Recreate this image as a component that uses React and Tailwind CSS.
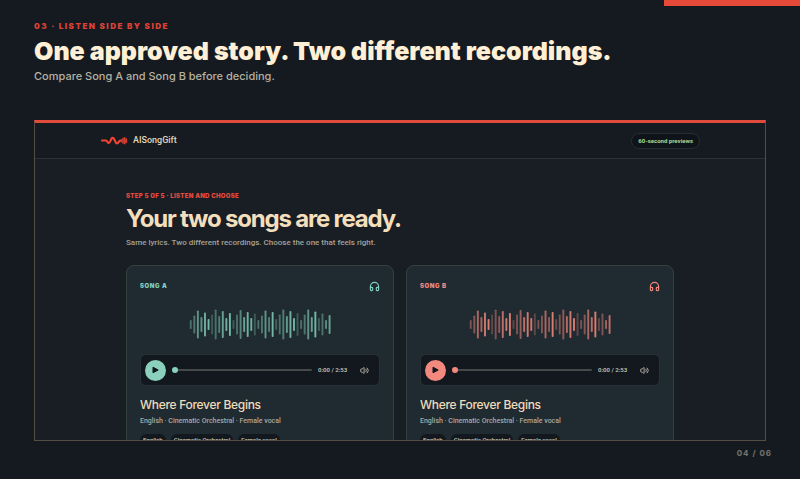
import { Headphones, Volume2 } from "lucide-react";

const WAVE = [
  [9, 0.5], [18, 0.55], [28, 0.75], [15, 0.75], [24, 0.95], [11, 1], [20, 0.35], [30, 0.5],
  [17, 0.6], [27, 0.85], [13, 0.95], [23, 1], [9, 0.35], [20, 0.5], [29, 0.65], [15, 0.85],
  [25, 0.95], [13, 0.95], [22, 0.35], [9, 0.5], [18, 0.55], [28, 0.75], [15, 0.6], [25, 1],
  [11, 0.4], [20, 0.5], [30, 0.6], [17, 0.8], [27, 0.95], [13, 1], [23, 0.35], [9, 0.5],
  [20, 0.55], [30, 0.75], [15, 0.85], [26, 1], [13, 0.4], [22, 0.5], [9, 0.7], [19, 0.85],
];

const SONGS = [
  {
    id: "a",
    label: "SONG A",
    text: "text-[#83d0bf]",
    fill: "bg-[#8ad0bd]",
    thumb: "[&::-webkit-slider-thumb]:bg-[#8ad0bd]",
    wave: "text-[#74b7a6]",
  },
  {
    id: "b",
    label: "SONG B",
    text: "text-[#f3897e]",
    fill: "bg-[#f3897e]",
    thumb: "[&::-webkit-slider-thumb]:bg-[#f3897e]",
    wave: "text-[#d97d72]",
  },
];

function Waveform({ className }) {
  return (
    <svg width="142" height="32" viewBox="0 0 142 32" className={className} aria-hidden="true">
      {WAVE.map(([h, o], i) => (
        <rect key={i} x={i * 3.56 + 0.8} y={16.5 - h / 2} width="1.9" height={h} rx="0.8" fill="currentColor" opacity={o} />
      ))}
    </svg>
  );
}

function Logo() {
  return (
    <svg width="29" height="10" viewBox="0 0 29 10" aria-hidden="true">
      <path
        d="M2 4.500h4c1.500 0 1.300 2.500 2.800 2.500 2 0 1.700-5.200 3.900-5.200S14.800 7.300 17 7.300c1.600 0 1.600-2.600 3.500-2.600"
        fill="none"
        stroke="#f4432f"
        strokeWidth="2.200"
        strokeLinecap="round"
      />
      <path d="M21.300 3.700v2M23 2.300v4.800M24.700 1.700v6M26.400 3v3.400" stroke="#cf3e32" strokeWidth="1.600" strokeLinecap="round" />
    </svg>
  );
}

function SongCard({ song }) {
  return (
    <article className="rounded-lg border border-[#35413f] bg-[#202a31] px-[13px] pt-3">
      <div className="flex h-4 items-center justify-between">
        <h3 className={`text-[6px] font-black leading-none tracking-widest ${song.text}`}>{song.label}</h3>
        <Headphones size={11} strokeWidth={2.5} className={song.text} aria-hidden="true" />
      </div>
      <div className="flex h-[60px] items-center justify-center">
        <Waveform className={song.wave} />
      </div>
      <div className="flex h-8 items-center rounded-md border border-[#283137] bg-[#12181e] pl-1 pr-[10px]">
        <button aria-label={`Play ${song.label}`} className={`flex size-[21px] shrink-0 items-center justify-center rounded-full ${song.fill}`}>
          <svg width="7" height="8" viewBox="0 0 7 8" aria-hidden="true">
            <path d="M1 1.200v5.600L6.200 4z" fill="#10171c" stroke="#10171c" strokeLinejoin="round" />
          </svg>
        </button>
        <input
          type="range"
          min="0"
          max="173"
          defaultValue="0"
          aria-label={`${song.label} position`}
          className={`ml-[6px] h-[6px] min-w-0 flex-1 appearance-none bg-transparent [&::-webkit-slider-runnable-track]:h-[2px] [&::-webkit-slider-runnable-track]:rounded-full [&::-webkit-slider-runnable-track]:bg-[#46494a] [&::-webkit-slider-thumb]:-mt-[2px] [&::-webkit-slider-thumb]:size-[6px] [&::-webkit-slider-thumb]:appearance-none [&::-webkit-slider-thumb]:rounded-full ${song.thumb}`}
        />
        <span className="ml-[6px] w-[30px] whitespace-nowrap font-[Roboto,sans-serif] text-[6px] font-semibold leading-none text-[#c5c1b2]">0:00 / 2:53</span>
        <button aria-label={`${song.label} volume`} className="ml-3 text-[#b9b5a8]">
          <Volume2 size={9} strokeWidth={2.5} aria-hidden="true" />
        </button>
      </div>
      <h4 className="mt-[11px] text-[12px] font-medium leading-4 tracking-tight text-[#efdcba]">Where Forever Begins</h4>
      <p className="mt-1 font-[Roboto,sans-serif] text-[7px] font-medium leading-[9px] text-[#aaa99f]">English · Cinematic Orchestral · Female vocal</p>
      <ul className="mt-2 flex gap-[5px] font-[Roboto,sans-serif] text-[6px] font-semibold leading-none text-[#c5c1b2]">
        {["English", "Cinematic Orchestral", "Female vocal"].map((tag) => (
          <li key={tag} className="whitespace-nowrap rounded-full bg-[#12181e] px-[3px] py-[3px]">{tag}</li>
        ))}
      </ul>
    </article>
  );
}

export default function App() {
  return (
    <div className="relative flex h-screen flex-col bg-[#151a21] px-[34px] pt-5 font-['Inter',sans-serif]">
      <div className="absolute right-0 top-0 h-[6px] w-[17%] bg-[#e54937]" />
      <header className="h-[100px] shrink-0">
        <p className="text-[8px] font-black leading-3 tracking-[1.5px] text-[#db4237]">03 · LISTEN SIDE BY SIDE</p>
        <h1 className="mt-[3px] whitespace-nowrap text-[25px] font-black leading-8 text-[#fff0d5]">One approved story. Two different recordings.</h1>
        <p className="text-[11px] font-medium leading-[18px] text-[#b5b1a1]">Compare Song A and Song B before deciding.</p>
      </header>

      <main className="min-h-0 flex-1 overflow-hidden border border-t-[3px] border-[#554d43] border-t-[#e04b3b] bg-[#191e24]">
        <div className="h-9 border-b border-[#2a3035] bg-[#151b21]">
          <div className="mx-auto flex h-full max-w-[600px] items-center justify-between">
            <a href="#home" className="flex items-center gap-1 font-[Roboto,sans-serif] text-[9px] font-medium leading-none text-[#e3d6bb]">
              <Logo />
              AISongGift
            </a>
            <span className="rounded-full border border-[#262d30] bg-[#0e1419] px-[6px] py-1 font-[Roboto,sans-serif] text-[6px] font-extrabold leading-none text-[#a8cf8c]">
              60-second previews
            </span>
          </div>
        </div>
        <div className="mx-auto max-w-[548px] pt-8">
          <p className="text-[6px] font-black leading-[9px] tracking-wider text-[#e44a3c]">STEP 5 OF 5 · LISTEN AND CHOOSE</p>
          <h2 className="mt-[3px] text-[24px] font-bold leading-8 tracking-tighter text-[#f4dfbd]">Your two songs are ready.</h2>
          <p className="mt-[2px] font-[Roboto,sans-serif] text-[8px] font-medium leading-3 text-[#a5a299]">Same lyrics. Two different recordings. Choose the one that feels right.</p>
          <div className="mt-4 grid grid-cols-2 gap-3">
            {SONGS.map((song) => (
              <SongCard key={song.id} song={song} />
            ))}
          </div>
        </div>
      </main>

      <footer className="-mr-[6px] flex h-[38px] shrink-0 justify-end pt-[6px] text-[8px] font-bold leading-3 tracking-[1px] text-[#77756a]">04 / 06</footer>
    </div>
  );
}
